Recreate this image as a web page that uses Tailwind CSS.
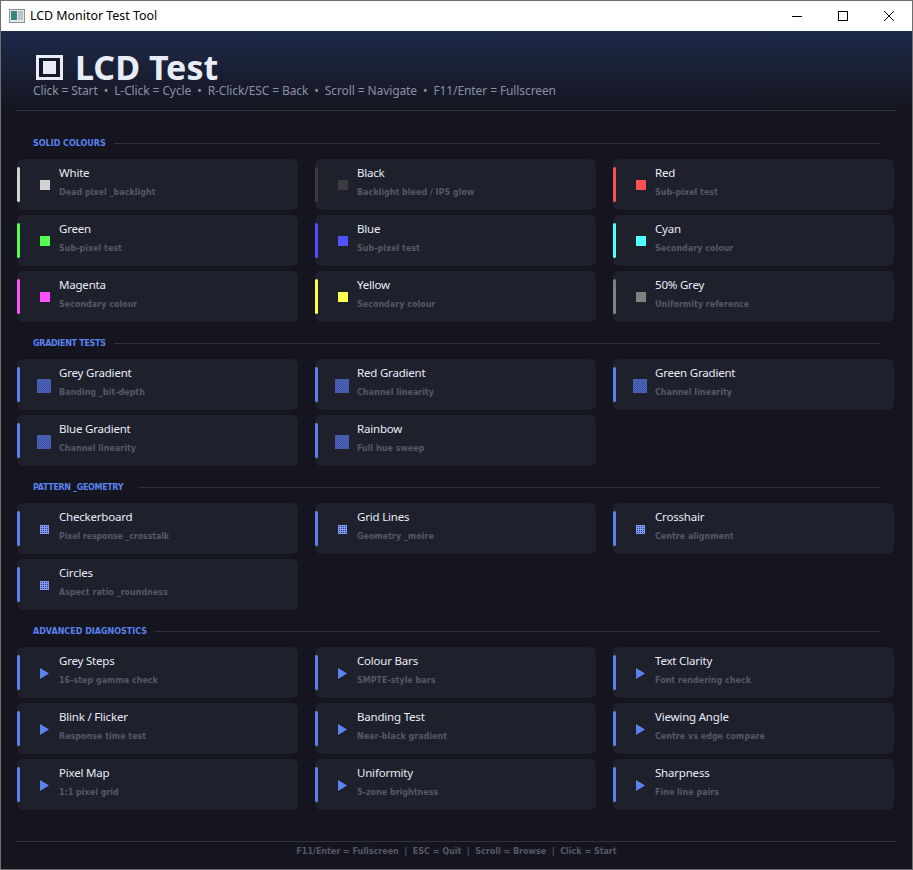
<!DOCTYPE html>
<html lang="en">
<head>
  <meta charset="UTF-8">
  <title>LCD Monitor Test Tool</title>
  <script src="https://cdn.jsdelivr.net/npm/@tailwindcss/browser@4"></script>
</head>
<body class="w-[913px] h-[870px] overflow-hidden bg-[#14151f] font-['Noto_Sans',sans-serif]">
  <div class="h-[870px] flex flex-col border border-[#6e6e6e]">
    <!-- Title bar -->
    <div class="h-[30px] shrink-0 bg-white flex items-center text-black">
      <svg class="ml-[8px] w-[16px] h-[14px]" viewBox="0 0 16 14">
        <rect x="0.5" y="0.5" width="15" height="13" fill="#e4e8ea" stroke="#8a9296"/>
        <rect x="2" y="2" width="6" height="9" fill="#3f8478"/>
        <rect x="9" y="2" width="5" height="9" fill="#b9c3c8"/>
      </svg>
      <span class="ml-[5px] text-[12.4px] leading-none">LCD Monitor Test Tool</span>
      <div class="ml-auto flex items-center">
        <svg class="w-[46px] h-[30px]" viewBox="0 0 46 30"><path d="M18 15.5h10" stroke="#000" fill="none"/></svg>
        <svg class="w-[46px] h-[30px]" viewBox="0 0 46 30"><rect x="18.5" y="10.5" width="9" height="9" stroke="#000" fill="none"/></svg>
        <svg class="w-[46px] h-[30px]" viewBox="0 0 46 30"><path d="M18 10l10 10M28 10l-10 10" stroke="#000" fill="none"/></svg>
      </div>
    </div>

    <!-- Header -->
    <div class="h-[79px] shrink-0 bg-gradient-to-b from-[#1e2a4b] to-[#14151f] px-[32px] pt-[20px]">
      <div class="flex items-center h-[32px]">
        <span class="ml-[3px] w-[27px] h-[25px] border-[3px] border-[#e8ecf6] bg-[#14192b] flex items-center justify-center">
          <span class="block w-[13px] h-[13px] bg-[#e8ecf6]"></span>
        </span>
        <h1 class="ml-[12px] text-[34px] leading-[32px] font-bold text-[#e8ecf6]">LCD Test</h1>
      </div>
      <p class="text-[12px] leading-[16px] mt-0 tracking-[-0.1px] text-[#8b90a3]">Click = Start &nbsp;•&nbsp; L-Click = Cycle &nbsp;•&nbsp; R-Click/ESC = Back &nbsp;•&nbsp; Scroll = Navigate &nbsp;•&nbsp; F11/Enter = Fullscreen</p>
    </div>
    <div class="mx-[15px] h-px shrink-0 bg-[#30323f]"></div>

    <!-- Sections -->
    <div class="px-[16px] pt-[24px] flex flex-col gap-[13px]">
      <section>
        <div class="flex items-center h-[16px] mx-[16px] gap-[8px]">
          <span class="relative top-[1px] font-['DejaVu_Sans',sans-serif] text-[8px] font-bold text-[#5b82f0] whitespace-nowrap">SOLID COLOURS</span>
          <span class="flex-1 h-px bg-[#30323f]"></span>
        </div>
        <div class="mt-[8px] grid grid-cols-[281px_281px_281px] gap-x-[17px] gap-y-[5px]">
          <div class="h-[51px] rounded-[6px] bg-[#1e202c] flex items-center">
            <span class="w-[3px] h-[35px] rounded-full bg-[#d2d2d2]"></span>
            <span class="ml-[20px] w-[10px] h-[10px] bg-[#d2d2d2]"></span>
            <div class="ml-[9px] -mt-[6px]">
              <p class="text-[11.5px] leading-[16px] tracking-[-0.2px] text-[#e8ecf6]">White</p>
              <p class="mt-[6px] font-['DejaVu_Sans',sans-serif] text-[8px] font-bold leading-[12px] text-[#555866]">Dead pixel _backlight</p>
            </div>
          </div>
          <div class="h-[51px] rounded-[6px] bg-[#1e202c] flex items-center">
            <span class="w-[3px] h-[35px] rounded-full bg-[#3c3c3c]"></span>
            <span class="ml-[20px] w-[10px] h-[10px] bg-[#3c3c3c]"></span>
            <div class="ml-[9px] -mt-[6px]">
              <p class="text-[11.5px] leading-[16px] tracking-[-0.2px] text-[#e8ecf6]">Black</p>
              <p class="mt-[6px] font-['DejaVu_Sans',sans-serif] text-[8px] font-bold leading-[12px] text-[#555866]">Backlight bleed / IPS glow</p>
            </div>
          </div>
          <div class="h-[51px] rounded-[6px] bg-[#1e202c] flex items-center">
            <span class="w-[3px] h-[35px] rounded-full bg-[#ff5050]"></span>
            <span class="ml-[20px] w-[10px] h-[10px] bg-[#ff5050]"></span>
            <div class="ml-[9px] -mt-[6px]">
              <p class="text-[11.5px] leading-[16px] tracking-[-0.2px] text-[#e8ecf6]">Red</p>
              <p class="mt-[6px] font-['DejaVu_Sans',sans-serif] text-[8px] font-bold leading-[12px] text-[#555866]">Sub-pixel test</p>
            </div>
          </div>
          <div class="h-[51px] rounded-[6px] bg-[#1e202c] flex items-center">
            <span class="w-[3px] h-[35px] rounded-full bg-[#50ff50]"></span>
            <span class="ml-[20px] w-[10px] h-[10px] bg-[#50ff50]"></span>
            <div class="ml-[9px] -mt-[6px]">
              <p class="text-[11.5px] leading-[16px] tracking-[-0.2px] text-[#e8ecf6]">Green</p>
              <p class="mt-[6px] font-['DejaVu_Sans',sans-serif] text-[8px] font-bold leading-[12px] text-[#555866]">Sub-pixel test</p>
            </div>
          </div>
          <div class="h-[51px] rounded-[6px] bg-[#1e202c] flex items-center">
            <span class="w-[3px] h-[35px] rounded-full bg-[#5050ff]"></span>
            <span class="ml-[20px] w-[10px] h-[10px] bg-[#5050ff]"></span>
            <div class="ml-[9px] -mt-[6px]">
              <p class="text-[11.5px] leading-[16px] tracking-[-0.2px] text-[#e8ecf6]">Blue</p>
              <p class="mt-[6px] font-['DejaVu_Sans',sans-serif] text-[8px] font-bold leading-[12px] text-[#555866]">Sub-pixel test</p>
            </div>
          </div>
          <div class="h-[51px] rounded-[6px] bg-[#1e202c] flex items-center">
            <span class="w-[3px] h-[35px] rounded-full bg-[#50ffff]"></span>
            <span class="ml-[20px] w-[10px] h-[10px] bg-[#50ffff]"></span>
            <div class="ml-[9px] -mt-[6px]">
              <p class="text-[11.5px] leading-[16px] tracking-[-0.2px] text-[#e8ecf6]">Cyan</p>
              <p class="mt-[6px] font-['DejaVu_Sans',sans-serif] text-[8px] font-bold leading-[12px] text-[#555866]">Secondary colour</p>
            </div>
          </div>
          <div class="h-[51px] rounded-[6px] bg-[#1e202c] flex items-center">
            <span class="w-[3px] h-[35px] rounded-full bg-[#ff50ff]"></span>
            <span class="ml-[20px] w-[10px] h-[10px] bg-[#ff50ff]"></span>
            <div class="ml-[9px] -mt-[6px]">
              <p class="text-[11.5px] leading-[16px] tracking-[-0.2px] text-[#e8ecf6]">Magenta</p>
              <p class="mt-[6px] font-['DejaVu_Sans',sans-serif] text-[8px] font-bold leading-[12px] text-[#555866]">Secondary colour</p>
            </div>
          </div>
          <div class="h-[51px] rounded-[6px] bg-[#1e202c] flex items-center">
            <span class="w-[3px] h-[35px] rounded-full bg-[#ffff50]"></span>
            <span class="ml-[20px] w-[10px] h-[10px] bg-[#ffff50]"></span>
            <div class="ml-[9px] -mt-[6px]">
              <p class="text-[11.5px] leading-[16px] tracking-[-0.2px] text-[#e8ecf6]">Yellow</p>
              <p class="mt-[6px] font-['DejaVu_Sans',sans-serif] text-[8px] font-bold leading-[12px] text-[#555866]">Secondary colour</p>
            </div>
          </div>
          <div class="h-[51px] rounded-[6px] bg-[#1e202c] flex items-center">
            <span class="w-[3px] h-[35px] rounded-full bg-[#808080]"></span>
            <span class="ml-[20px] w-[10px] h-[10px] bg-[#808080]"></span>
            <div class="ml-[9px] -mt-[6px]">
              <p class="text-[11.5px] leading-[16px] tracking-[-0.2px] text-[#e8ecf6]">50% Grey</p>
              <p class="mt-[6px] font-['DejaVu_Sans',sans-serif] text-[8px] font-bold leading-[12px] text-[#555866]">Uniformity reference</p>
            </div>
          </div>
        </div>
      </section>

      <section>
        <div class="flex items-center h-[16px] mx-[16px] gap-[8px]">
          <span class="relative top-[1px] font-['DejaVu_Sans',sans-serif] text-[8px] font-bold tracking-[-0.3px] text-[#5b82f0] whitespace-nowrap">GRADIENT TESTS</span>
          <span class="flex-1 h-px bg-[#30323f]"></span>
        </div>
        <div class="mt-[8px] grid grid-cols-[281px_281px_281px] gap-x-[17px] gap-y-[5px]">
          <div class="h-[51px] rounded-[6px] bg-[#1e202c] flex items-center">
            <span class="w-[3px] h-[35px] rounded-full bg-[#5b82f0]"></span>
            <span class="ml-[17px] mt-[3px] w-[14px] h-[14px] bg-[repeating-conic-gradient(#4f67bb_0_25%,#3d52a4_0_50%)] bg-[length:2px_2px]"></span>
            <div class="ml-[8px] -mt-[6px]">
              <p class="text-[11.5px] leading-[16px] tracking-[-0.2px] text-[#e8ecf6]">Grey Gradient</p>
              <p class="mt-[6px] font-['DejaVu_Sans',sans-serif] text-[8px] font-bold leading-[12px] text-[#555866]">Banding _bit-depth</p>
            </div>
          </div>
          <div class="h-[51px] rounded-[6px] bg-[#1e202c] flex items-center">
            <span class="w-[3px] h-[35px] rounded-full bg-[#5b82f0]"></span>
            <span class="ml-[17px] mt-[3px] w-[14px] h-[14px] bg-[repeating-conic-gradient(#4f67bb_0_25%,#3d52a4_0_50%)] bg-[length:2px_2px]"></span>
            <div class="ml-[8px] -mt-[6px]">
              <p class="text-[11.5px] leading-[16px] tracking-[-0.2px] text-[#e8ecf6]">Red Gradient</p>
              <p class="mt-[6px] font-['DejaVu_Sans',sans-serif] text-[8px] font-bold leading-[12px] text-[#555866]">Channel linearity</p>
            </div>
          </div>
          <div class="h-[51px] rounded-[6px] bg-[#1e202c] flex items-center">
            <span class="w-[3px] h-[35px] rounded-full bg-[#5b82f0]"></span>
            <span class="ml-[17px] mt-[3px] w-[14px] h-[14px] bg-[repeating-conic-gradient(#4f67bb_0_25%,#3d52a4_0_50%)] bg-[length:2px_2px]"></span>
            <div class="ml-[8px] -mt-[6px]">
              <p class="text-[11.5px] leading-[16px] tracking-[-0.2px] text-[#e8ecf6]">Green Gradient</p>
              <p class="mt-[6px] font-['DejaVu_Sans',sans-serif] text-[8px] font-bold leading-[12px] text-[#555866]">Channel linearity</p>
            </div>
          </div>
          <div class="h-[51px] rounded-[6px] bg-[#1e202c] flex items-center">
            <span class="w-[3px] h-[35px] rounded-full bg-[#5b82f0]"></span>
            <span class="ml-[17px] mt-[3px] w-[14px] h-[14px] bg-[repeating-conic-gradient(#4f67bb_0_25%,#3d52a4_0_50%)] bg-[length:2px_2px]"></span>
            <div class="ml-[8px] -mt-[6px]">
              <p class="text-[11.5px] leading-[16px] tracking-[-0.2px] text-[#e8ecf6]">Blue Gradient</p>
              <p class="mt-[6px] font-['DejaVu_Sans',sans-serif] text-[8px] font-bold leading-[12px] text-[#555866]">Channel linearity</p>
            </div>
          </div>
          <div class="h-[51px] rounded-[6px] bg-[#1e202c] flex items-center">
            <span class="w-[3px] h-[35px] rounded-full bg-[#5b82f0]"></span>
            <span class="ml-[17px] mt-[3px] w-[14px] h-[14px] bg-[repeating-conic-gradient(#4f67bb_0_25%,#3d52a4_0_50%)] bg-[length:2px_2px]"></span>
            <div class="ml-[8px] -mt-[6px]">
              <p class="text-[11.5px] leading-[16px] tracking-[-0.2px] text-[#e8ecf6]">Rainbow</p>
              <p class="mt-[6px] font-['DejaVu_Sans',sans-serif] text-[8px] font-bold leading-[12px] text-[#555866]">Full hue sweep</p>
            </div>
          </div>
        </div>
      </section>

      <section>
        <div class="flex items-center h-[16px] mx-[16px] gap-[16px]">
          <span class="relative top-[1px] font-['DejaVu_Sans',sans-serif] text-[8px] font-bold tracking-[-0.35px] text-[#5b82f0] whitespace-nowrap">PATTERN _GEOMETRY</span>
          <span class="flex-1 h-px bg-[#30323f]"></span>
        </div>
        <div class="mt-[8px] grid grid-cols-[281px_281px_281px] gap-x-[17px] gap-y-[5px]">
          <div class="h-[51px] rounded-[6px] bg-[#1e202c] flex items-center">
            <span class="w-[3px] h-[35px] rounded-full bg-[#5b82f0]"></span>
            <svg class="ml-[20px] mt-[1px] w-[9px] h-[9px]" viewBox="0 0 9 9"><rect width="9" height="9" fill="#7f9bf5"/><path d="M1 1h1v1h-1zM3 1h1v1h-1zM5 1h1v1h-1zM7 1h1v1h-1zM1 3h1v1h-1zM3 3h1v1h-1zM5 3h1v1h-1zM7 3h1v1h-1zM1 5h1v1h-1zM3 5h1v1h-1zM5 5h1v1h-1zM7 5h1v1h-1zM1 7h1v1h-1zM3 7h1v1h-1zM5 7h1v1h-1zM7 7h1v1h-1z" fill="#2f3a78"/></svg>
            <div class="ml-[10px] -mt-[6px]">
              <p class="text-[11.5px] leading-[16px] tracking-[-0.2px] text-[#e8ecf6]">Checkerboard</p>
              <p class="mt-[6px] font-['DejaVu_Sans',sans-serif] text-[8px] font-bold leading-[12px] tracking-[-0.15px] text-[#555866]">Pixel response _crosstalk</p>
            </div>
          </div>
          <div class="h-[51px] rounded-[6px] bg-[#1e202c] flex items-center">
            <span class="w-[3px] h-[35px] rounded-full bg-[#5b82f0]"></span>
            <svg class="ml-[20px] mt-[1px] w-[9px] h-[9px]" viewBox="0 0 9 9"><rect width="9" height="9" fill="#7f9bf5"/><path d="M1 1h1v1h-1zM3 1h1v1h-1zM5 1h1v1h-1zM7 1h1v1h-1zM1 3h1v1h-1zM3 3h1v1h-1zM5 3h1v1h-1zM7 3h1v1h-1zM1 5h1v1h-1zM3 5h1v1h-1zM5 5h1v1h-1zM7 5h1v1h-1zM1 7h1v1h-1zM3 7h1v1h-1zM5 7h1v1h-1zM7 7h1v1h-1z" fill="#2f3a78"/></svg>
            <div class="ml-[10px] -mt-[6px]">
              <p class="text-[11.5px] leading-[16px] tracking-[-0.2px] text-[#e8ecf6]">Grid Lines</p>
              <p class="mt-[6px] font-['DejaVu_Sans',sans-serif] text-[8px] font-bold leading-[12px] text-[#555866]">Geometry _moire</p>
            </div>
          </div>
          <div class="h-[51px] rounded-[6px] bg-[#1e202c] flex items-center">
            <span class="w-[3px] h-[35px] rounded-full bg-[#5b82f0]"></span>
            <svg class="ml-[20px] mt-[1px] w-[9px] h-[9px]" viewBox="0 0 9 9"><rect width="9" height="9" fill="#7f9bf5"/><path d="M1 1h1v1h-1zM3 1h1v1h-1zM5 1h1v1h-1zM7 1h1v1h-1zM1 3h1v1h-1zM3 3h1v1h-1zM5 3h1v1h-1zM7 3h1v1h-1zM1 5h1v1h-1zM3 5h1v1h-1zM5 5h1v1h-1zM7 5h1v1h-1zM1 7h1v1h-1zM3 7h1v1h-1zM5 7h1v1h-1zM7 7h1v1h-1z" fill="#2f3a78"/></svg>
            <div class="ml-[10px] -mt-[6px]">
              <p class="text-[11.5px] leading-[16px] tracking-[-0.2px] text-[#e8ecf6]">Crosshair</p>
              <p class="mt-[6px] font-['DejaVu_Sans',sans-serif] text-[8px] font-bold leading-[12px] text-[#555866]">Centre alignment</p>
            </div>
          </div>
          <div class="h-[51px] rounded-[6px] bg-[#1e202c] flex items-center">
            <span class="w-[3px] h-[35px] rounded-full bg-[#5b82f0]"></span>
            <svg class="ml-[20px] mt-[1px] w-[9px] h-[9px]" viewBox="0 0 9 9"><rect width="9" height="9" fill="#7f9bf5"/><path d="M1 1h1v1h-1zM3 1h1v1h-1zM5 1h1v1h-1zM7 1h1v1h-1zM1 3h1v1h-1zM3 3h1v1h-1zM5 3h1v1h-1zM7 3h1v1h-1zM1 5h1v1h-1zM3 5h1v1h-1zM5 5h1v1h-1zM7 5h1v1h-1zM1 7h1v1h-1zM3 7h1v1h-1zM5 7h1v1h-1zM7 7h1v1h-1z" fill="#2f3a78"/></svg>
            <div class="ml-[10px] -mt-[6px]">
              <p class="text-[11.5px] leading-[16px] tracking-[-0.2px] text-[#e8ecf6]">Circles</p>
              <p class="mt-[6px] font-['DejaVu_Sans',sans-serif] text-[8px] font-bold leading-[12px] text-[#555866]">Aspect ratio _roundness</p>
            </div>
          </div>
        </div>
      </section>

      <section>
        <div class="flex items-center h-[16px] mx-[16px] gap-[8px]">
          <span class="relative top-[1px] font-['DejaVu_Sans',sans-serif] text-[8px] font-bold text-[#5b82f0] whitespace-nowrap">ADVANCED DIAGNOSTICS</span>
          <span class="flex-1 h-px bg-[#30323f]"></span>
        </div>
        <div class="mt-[8px] grid grid-cols-[281px_281px_281px] gap-x-[17px] gap-y-[5px]">
          <div class="h-[51px] rounded-[6px] bg-[#1e202c] flex items-center">
            <span class="w-[3px] h-[35px] rounded-full bg-[#5b82f0]"></span>
            <svg class="ml-[20px] mt-[1px] w-[9px] h-[11px]" viewBox="0 0 9 11"><path d="M0 0l9 5.5-9 5.5z" fill="#5b82f0"/></svg>
            <div class="ml-[10px] -mt-[6px]">
              <p class="text-[11.5px] leading-[16px] tracking-[-0.2px] text-[#e8ecf6]">Grey Steps</p>
              <p class="mt-[6px] font-['DejaVu_Sans',sans-serif] text-[8px] font-bold leading-[12px] text-[#555866]">16-step gamma check</p>
            </div>
          </div>
          <div class="h-[51px] rounded-[6px] bg-[#1e202c] flex items-center">
            <span class="w-[3px] h-[35px] rounded-full bg-[#5b82f0]"></span>
            <svg class="ml-[20px] mt-[1px] w-[9px] h-[11px]" viewBox="0 0 9 11"><path d="M0 0l9 5.5-9 5.5z" fill="#5b82f0"/></svg>
            <div class="ml-[10px] -mt-[6px]">
              <p class="text-[11.5px] leading-[16px] tracking-[-0.2px] text-[#e8ecf6]">Colour Bars</p>
              <p class="mt-[6px] font-['DejaVu_Sans',sans-serif] text-[8px] font-bold leading-[12px] text-[#555866]">SMPTE-style bars</p>
            </div>
          </div>
          <div class="h-[51px] rounded-[6px] bg-[#1e202c] flex items-center">
            <span class="w-[3px] h-[35px] rounded-full bg-[#5b82f0]"></span>
            <svg class="ml-[20px] mt-[1px] w-[9px] h-[11px]" viewBox="0 0 9 11"><path d="M0 0l9 5.5-9 5.5z" fill="#5b82f0"/></svg>
            <div class="ml-[10px] -mt-[6px]">
              <p class="text-[11.5px] leading-[16px] tracking-[-0.2px] text-[#e8ecf6]">Text Clarity</p>
              <p class="mt-[6px] font-['DejaVu_Sans',sans-serif] text-[8px] font-bold leading-[12px] text-[#555866]">Font rendering check</p>
            </div>
          </div>
          <div class="h-[51px] rounded-[6px] bg-[#1e202c] flex items-center">
            <span class="w-[3px] h-[35px] rounded-full bg-[#5b82f0]"></span>
            <svg class="ml-[20px] mt-[1px] w-[9px] h-[11px]" viewBox="0 0 9 11"><path d="M0 0l9 5.5-9 5.5z" fill="#5b82f0"/></svg>
            <div class="ml-[10px] -mt-[6px]">
              <p class="text-[11.5px] leading-[16px] tracking-[-0.2px] text-[#e8ecf6]">Blink / Flicker</p>
              <p class="mt-[6px] font-['DejaVu_Sans',sans-serif] text-[8px] font-bold leading-[12px] text-[#555866]">Response time test</p>
            </div>
          </div>
          <div class="h-[51px] rounded-[6px] bg-[#1e202c] flex items-center">
            <span class="w-[3px] h-[35px] rounded-full bg-[#5b82f0]"></span>
            <svg class="ml-[20px] mt-[1px] w-[9px] h-[11px]" viewBox="0 0 9 11"><path d="M0 0l9 5.5-9 5.5z" fill="#5b82f0"/></svg>
            <div class="ml-[10px] -mt-[6px]">
              <p class="text-[11.5px] leading-[16px] tracking-[-0.2px] text-[#e8ecf6]">Banding Test</p>
              <p class="mt-[6px] font-['DejaVu_Sans',sans-serif] text-[8px] font-bold leading-[12px] text-[#555866]">Near-black gradient</p>
            </div>
          </div>
          <div class="h-[51px] rounded-[6px] bg-[#1e202c] flex items-center">
            <span class="w-[3px] h-[35px] rounded-full bg-[#5b82f0]"></span>
            <svg class="ml-[20px] mt-[1px] w-[9px] h-[11px]" viewBox="0 0 9 11"><path d="M0 0l9 5.5-9 5.5z" fill="#5b82f0"/></svg>
            <div class="ml-[10px] -mt-[6px]">
              <p class="text-[11.5px] leading-[16px] tracking-[-0.2px] text-[#e8ecf6]">Viewing Angle</p>
              <p class="mt-[6px] font-['DejaVu_Sans',sans-serif] text-[8px] font-bold leading-[12px] text-[#555866]">Centre vs edge compare</p>
            </div>
          </div>
          <div class="h-[51px] rounded-[6px] bg-[#1e202c] flex items-center">
            <span class="w-[3px] h-[35px] rounded-full bg-[#5b82f0]"></span>
            <svg class="ml-[20px] mt-[1px] w-[9px] h-[11px]" viewBox="0 0 9 11"><path d="M0 0l9 5.5-9 5.5z" fill="#5b82f0"/></svg>
            <div class="ml-[10px] -mt-[6px]">
              <p class="text-[11.5px] leading-[16px] tracking-[-0.2px] text-[#e8ecf6]">Pixel Map</p>
              <p class="mt-[6px] font-['DejaVu_Sans',sans-serif] text-[8px] font-bold leading-[12px] text-[#555866]">1:1 pixel grid</p>
            </div>
          </div>
          <div class="h-[51px] rounded-[6px] bg-[#1e202c] flex items-center">
            <span class="w-[3px] h-[35px] rounded-full bg-[#5b82f0]"></span>
            <svg class="ml-[20px] mt-[1px] w-[9px] h-[11px]" viewBox="0 0 9 11"><path d="M0 0l9 5.5-9 5.5z" fill="#5b82f0"/></svg>
            <div class="ml-[10px] -mt-[6px]">
              <p class="text-[11.5px] leading-[16px] tracking-[-0.2px] text-[#e8ecf6]">Uniformity</p>
              <p class="mt-[6px] font-['DejaVu_Sans',sans-serif] text-[8px] font-bold leading-[12px] text-[#555866]">5-zone brightness</p>
            </div>
          </div>
          <div class="h-[51px] rounded-[6px] bg-[#1e202c] flex items-center">
            <span class="w-[3px] h-[35px] rounded-full bg-[#5b82f0]"></span>
            <svg class="ml-[20px] mt-[1px] w-[9px] h-[11px]" viewBox="0 0 9 11"><path d="M0 0l9 5.5-9 5.5z" fill="#5b82f0"/></svg>
            <div class="ml-[10px] -mt-[6px]">
              <p class="text-[11.5px] leading-[16px] tracking-[-0.2px] text-[#e8ecf6]">Sharpness</p>
              <p class="mt-[6px] font-['DejaVu_Sans',sans-serif] text-[8px] font-bold leading-[12px] text-[#555866]">Fine line pairs</p>
            </div>
          </div>
        </div>
      </section>
    </div>

    <!-- Footer -->
    <div class="mt-auto mx-[15px] border-t border-[#30323f] h-[28px] pt-[3px] text-center font-['DejaVu_Sans',sans-serif] text-[8px] font-bold leading-[13px] text-[#555866]">F11/Enter = Fullscreen &nbsp;|&nbsp; ESC = Quit &nbsp;|&nbsp; Scroll = Browse &nbsp;|&nbsp; Click = Start</div>
  </div>
</body>
</html>
